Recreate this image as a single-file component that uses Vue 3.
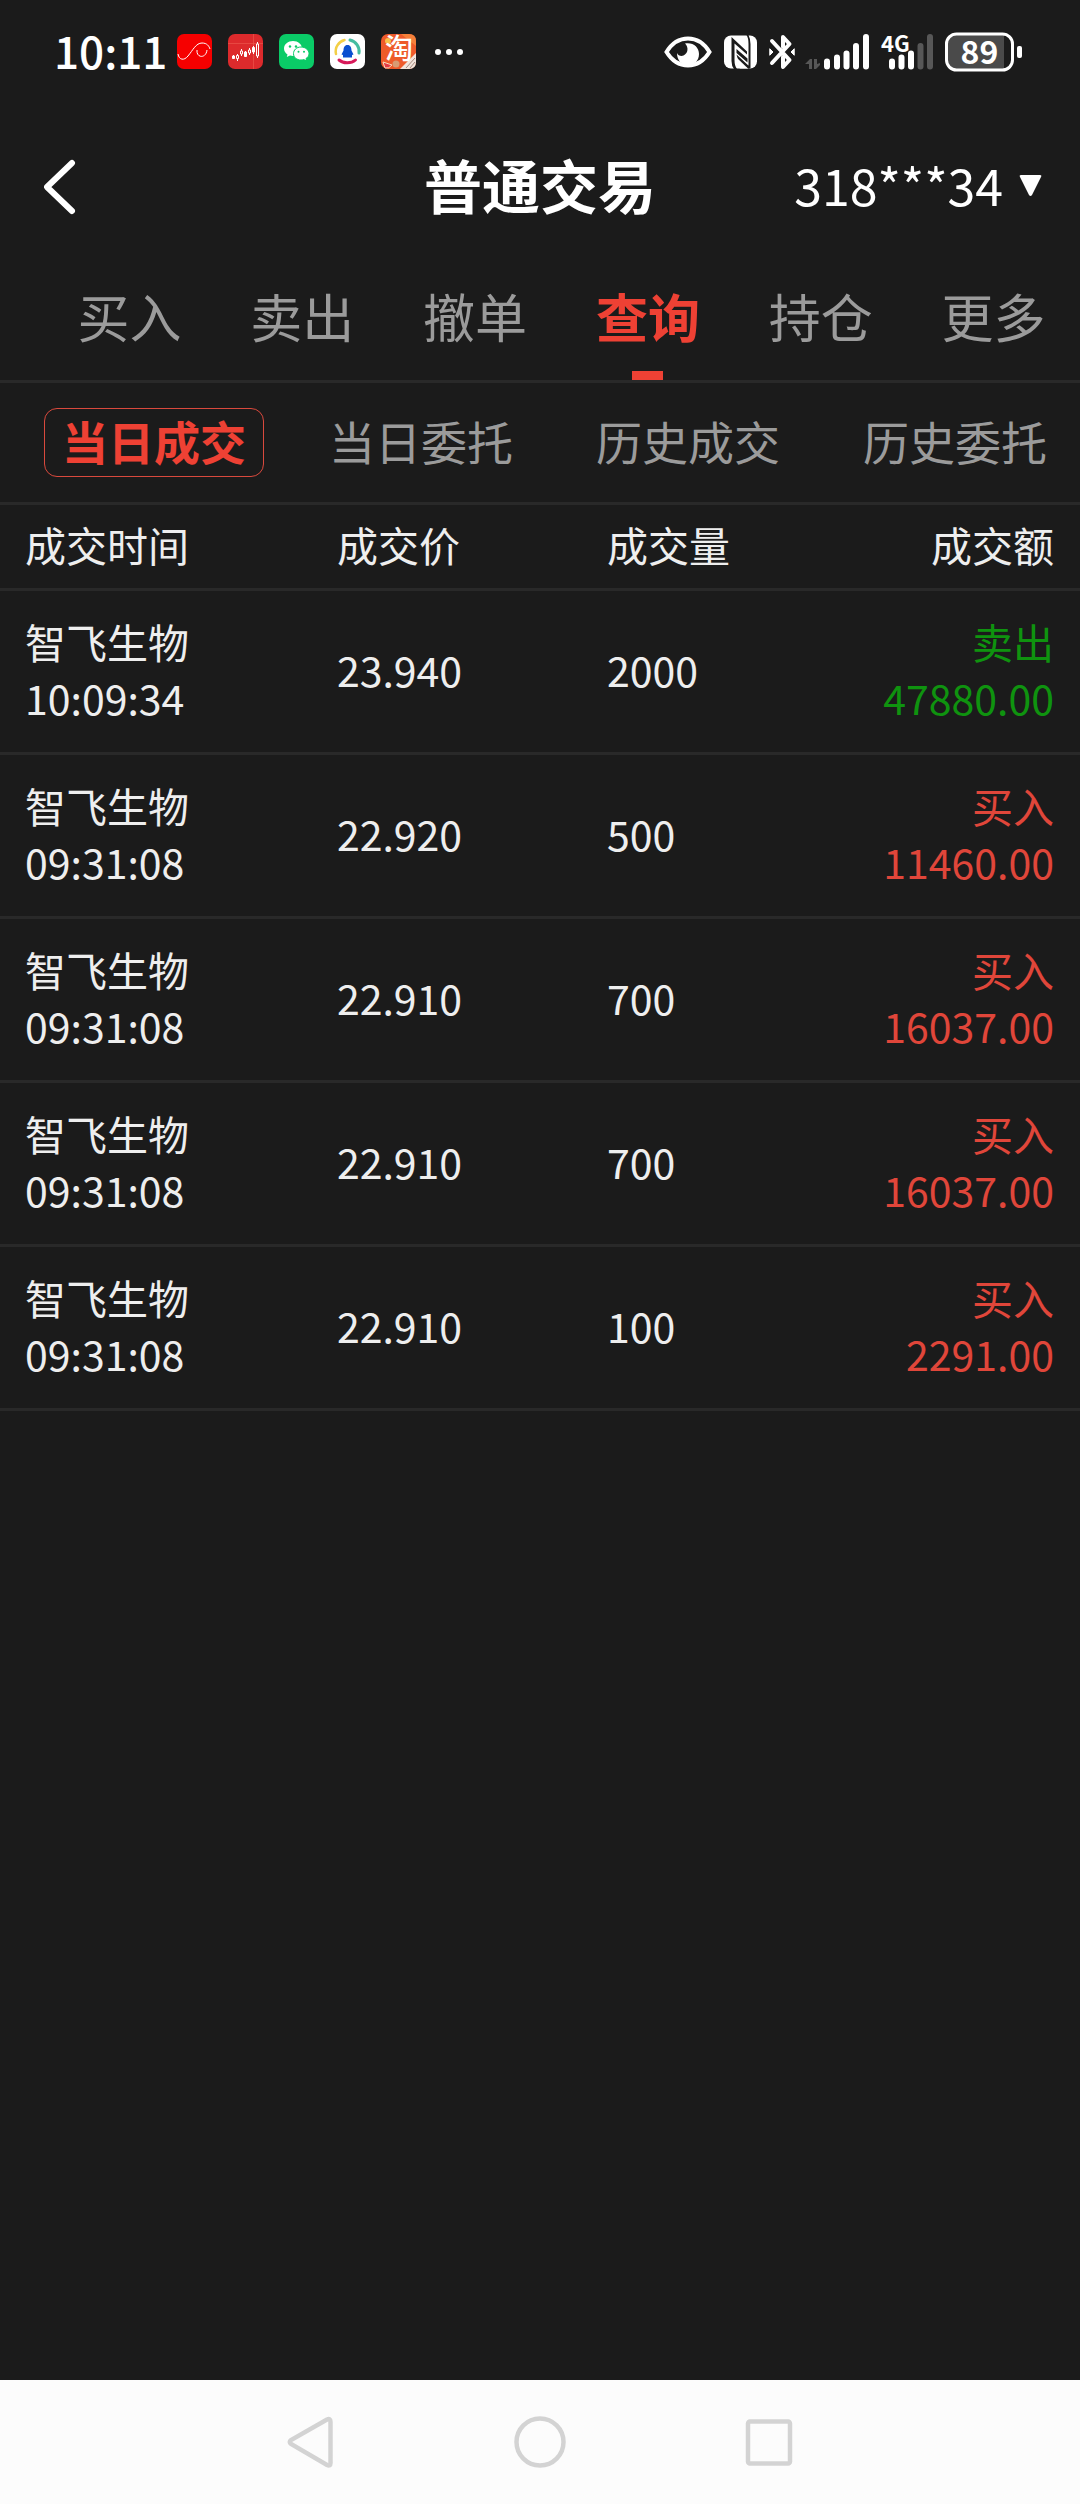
<script setup>
import { ref } from 'vue'

const tabs = ['买入', '卖出', '撤单', '查询', '持仓', '更多']
const activeTab = ref('查询')

const filters = ['当日成交', '当日委托', '历史成交', '历史委托']
const activeFilter = ref('当日成交')

const trades = [
  { name: '智飞生物', time: '10:09:34', price: '23.940', volume: '2000', side: '卖出', amount: '47880.00' },
  { name: '智飞生物', time: '09:31:08', price: '22.920', volume: '500', side: '买入', amount: '11460.00' },
  { name: '智飞生物', time: '09:31:08', price: '22.910', volume: '700', side: '买入', amount: '16037.00' },
  { name: '智飞生物', time: '09:31:08', price: '22.910', volume: '700', side: '买入', amount: '16037.00' },
  { name: '智飞生物', time: '09:31:08', price: '22.910', volume: '100', side: '买入', amount: '2291.00' },
]
</script>

<template>
  <div class="screen">
    <div class="status">
      <span class="clock">10:11</span>
      <div class="apps">
        <svg width="35" height="35" viewBox="0 0 35 35">
          <rect width="35" height="35" rx="7" fill="#f60000" />
          <path d="M1 20C2 26 7 27 11 22C16 16 19 9 25 9C30 9 32 12 33 15M20 16C19 24 29 25 30 16" fill="none" stroke="#fff" stroke-width="1" />
        </svg>
        <svg width="35" height="35" viewBox="0 0 35 35">
          <rect width="35" height="35" rx="7" fill="#dd2a2c" />
          <path d="M0 9.500H35M25.500 0V35" stroke="#ee5a50" stroke-width=".6" />
          <path d="M5.500 21V25M9.500 20V27M13.500 15V22M17.500 17V23M21.500 14V21M25.500 12V20M29.500 8V24" stroke="#fff" stroke-width="1" />
          <path d="M4.500 22h2v2.500h-2zM16.500 18h2v4.500h-2zM24.500 13.500h2v4.500h-2z" fill="#fff" stroke="#fff" />
          <path d="M8.500 21.500h2v3h-2zM12.500 17h2v3h-2zM20.500 16h2v3h-2zM28.500 10h2v12h-2z" fill="#dd2a2c" stroke="#fff" />
        </svg>
        <svg width="35" height="35" viewBox="0 0 35 35">
          <rect width="35" height="35" rx="7" fill="#0acb67" />
          <path d="M14 7C9 7 5 10.300 5 14.500C5 17 6.200 19 8.500 20.400L7.800 23L11 21.500C12 21.800 13 22 14 22C19 22 23 18.700 23 14.500S19 7 14 7Z" fill="#fff" />
          <path d="M22 13C17.500 13 14.500 16 14.500 19.700S17.800 26 22 26C23 26 24 25.900 24.800 25.600L27.600 27L27 24.500C29 23.400 30 21.600 30 19.700C30 16 26.500 13 22 13Z" fill="#fff" stroke="#0acb67" stroke-width="1" />
          <g fill="#0acb67"><circle cx="11" cy="12.500" r="1.200" /><circle cx="17" cy="12.500" r="1.200" /><circle cx="19.500" cy="17.800" r="1" /><circle cx="25" cy="17.800" r="1" /></g>
        </svg>
        <svg width="35" height="35" viewBox="0 0 35 35">
          <rect width="35" height="35" rx="7" fill="#fff" />
          <path d="M6 20C4.500 13 9 7.500 14.500 6" fill="none" stroke="#f3cf45" stroke-width="2.500" stroke-linecap="round" />
          <path d="M20 6C26 7.500 30 13 29 19" fill="none" stroke="#45bda0" stroke-width="3" stroke-linecap="round" />
          <path d="M9 26C13 29.500 21 30 25.500 26" fill="none" stroke="#d71959" stroke-width="3" stroke-linecap="round" />
          <path d="M17.500 11C14.500 11 13.500 13.500 13.500 16.500L11.500 20.500L13 21V23.500H22V21L23.500 20.500L21.500 16.500C21.500 13.500 20.500 11 17.500 11Z" fill="#0a4fd0" />
        </svg>
        <span class="tao">
          <svg width="35" height="35" viewBox="0 0 35 35">
            <rect width="35" height="35" rx="7" fill="#ee5a2a" />
            <path d="M20 0H28Q35 0 35 7V12Z" fill="#f5803a" />
            <circle cx="7" cy="7" r="3" fill="#f9c04a" />
            <path d="M19 35L35 19V28Q35 35 28 35Z" fill="#f1e4dc" />
            <path d="M25 34L34 24M29 34L34 28" stroke="#a78b80" stroke-width="1" />
            <path d="M2 28L11 31Q8 35 4 34Z" fill="#e33b45" stroke="#f8d9b9" stroke-width="1" />
            <circle cx="15" cy="30" r="3.500" fill="#d89b72" />
          </svg>
          <span class="tao-text">淘</span>
        </span>
      </div>
      <svg class="dots" width="28" height="6" viewBox="0 0 28 6" fill="#fff">
        <circle cx="3" cy="3" r="3" /><circle cx="14" cy="3" r="3" /><circle cx="25" cy="3" r="3" />
      </svg>
      <div class="indicators">
        <svg width="48" height="40" viewBox="0 0 48 40">
          <path d="M2.500 20C8 11 15.500 6.500 24 6.500S40 11 45.500 20C40 29 32.500 33.500 24 33.500S8 29 2.500 20Z" fill="none" stroke="#fff" stroke-width="4" />
          <path d="M21 11.500C29 10 35 15 35 22C35 29 30 33 24 33C17 33 13 28 13 21C14 23.500 17 24.500 19.500 23.500C24 21.500 25 15.500 21 11.500Z" fill="#fff" />
        </svg>
        <svg class="nfc" width="34" height="40" viewBox="0 0 34 40">
          <rect x="0" y="3.500" width="33" height="33" rx="7" fill="#fff" />
          <path d="M7.500 5L23 19.500V22.500L10.500 11.500V28Q10.500 34 13 37H10Q7.500 34 7.500 29ZM12.500 17L23.500 26.500V30.500L12.500 21ZM12.500 22.500L25.500 34.500V37Q14 33 12.500 22.500ZM22.500 3H24.500Q26.500 7 26.500 12V36H24.500V12Q24.500 6 22.500 3Z" fill="#1b1b1b" />
          <path d="M12.500 25.500L24 36.500H16Q12.500 34 12.500 28Z" fill="#fff" />
        </svg>
        <svg class="bt" width="26" height="40" viewBox="0 0 26 40" fill="none" stroke="#fff" stroke-linejoin="round" stroke-linecap="round">
          <path d="M3 9L20.500 28L14 35V25M14 15V5L20.500 12L3 31" stroke-width="4" />
          <path d="M1 17L4 20L1 23ZM25 17L22 20L25 23Z" stroke-width="1" fill="#fff" />
        </svg>
        <svg class="signal" width="66" height="40" viewBox="0 0 66 40">
          <path d="M1 32L6 27H8V37H5V32ZM10 27H13V32L16 31V33L12 37H10Z" fill="#575757" />
          <path d="M23 29.500V34.500M33 25.500V34.500M42.500 21.500V34.500M52 14V34.500M62 5V34.500" stroke="#fff" stroke-width="6" stroke-linecap="round" />
        </svg>
        <div class="signal-4g">
          <span class="net">4G</span>
          <svg width="54" height="40" viewBox="0 0 54 40" stroke-width="6" stroke-linecap="round">
            <path d="M11 29.500V34.500M20.500 25.500V34.500M30 21.500V34.500" stroke="#fff" />
            <path d="M39.500 14V34.500M49 5V34.500" stroke="#575757" />
          </svg>
        </div>
        <div class="battery">
          <svg width="78" height="40" viewBox="0 0 78 40">
            <path d="M10 3H59V37H10Q3 37 3 30V10Q3 3 10 3Z" fill="#4a4a4a" />
            <rect x="1.500" y="2" width="66" height="36" rx="10" fill="none" stroke="#fff" stroke-width="3" />
            <rect x="72" y="14" width="5" height="12" rx="2" fill="#fff" />
          </svg>
          <span class="level">89</span>
        </div>
      </div>
    </div>

    <header class="bar">
      <button class="back" type="button" aria-label="返回">
        <svg width="34" height="56" viewBox="0 0 34 56" fill="none" stroke="#fff" stroke-width="6" stroke-linecap="round" stroke-linejoin="round">
          <path d="M28 4L3 28L28 52" />
        </svg>
      </button>
      <h1>普通交易</h1>
      <button class="account" type="button">
        <span>318***34</span>
        <svg width="23" height="23" viewBox="0 0 23 23"><path d="M2 1H21Q23 1 22 3L13 21Q11.500 23 10 21L1 3Q0 1 2 1Z" fill="#fff" /></svg>
      </button>
    </header>

    <nav class="tabs">
      <button v-for="t in tabs" :key="t" type="button" :class="{ on: t === activeTab }" @click="activeTab = t">{{ t }}</button>
    </nav>

    <div class="filters">
      <button v-for="f in filters" :key="f" type="button" :class="{ on: f === activeFilter }" @click="activeFilter = f">{{ f }}</button>
    </div>

    <table>
      <colgroup>
        <col class="c-time" /><col class="c-price" /><col class="c-volume" /><col />
      </colgroup>
      <thead>
        <tr><th>成交时间</th><th>成交价</th><th>成交量</th><th>成交额</th></tr>
      </thead>
      <tbody>
        <tr v-for="(t, i) in trades" :key="i">
          <td><div>{{ t.name }}</div><div>{{ t.time }}</div></td>
          <td>{{ t.price }}</td>
          <td>{{ t.volume }}</td>
          <td :class="t.side === '卖出' ? 'sell' : 'buy'"><div>{{ t.side }}</div><div>{{ t.amount }}</div></td>
        </tr>
      </tbody>
    </table>

    <footer class="softkeys">
      <button type="button" aria-label="返回">
        <svg width="52" height="52" viewBox="0 0 52 52"><path d="M42 3.500Q45.500 2 45.500 6V47Q45.500 50.500 42 49L6 28Q3.500 26 6 24Z" /></svg>
      </button>
      <button type="button" aria-label="主屏幕">
        <svg width="52" height="52" viewBox="0 0 52 52"><circle cx="26" cy="26" r="23.500" /></svg>
      </button>
      <button type="button" aria-label="最近任务">
        <svg width="52" height="52" viewBox="0 0 52 52"><rect x="5" y="5.500" width="42" height="42" rx="2" /></svg>
      </button>
    </footer>
  </div>
</template>

<style>
body {
  margin: 0;
  background: #1b1b1b;
}
</style>

<style scoped>
.screen {
  min-height: 100vh;
  display: flex;
  flex-direction: column;
  background: #1b1b1b;
  color: #eee;
  font-family: "Noto Sans CJK SC", "Noto Sans", sans-serif;
}
svg {
  display: block;
}
button {
  border: 0;
  padding: 0;
  margin: 0;
  background: none;
  color: inherit;
  font: inherit;
}
.status {
  height: 103px;
  display: flex;
  align-items: center;
  padding: 0 57px 0 54px;
  color: #fff;
}
.clock {
  font-size: 44px;
  font-weight: 500;
  line-height: 48px;
  padding-bottom: 4px;
  width: 123px;
}
.apps {
  display: flex;
  gap: 16px;
}
.dots {
  margin-left: 19px;
}
.tao {
  position: relative;
}
.tao-text {
  position: absolute;
  left: 4px;
  top: 0;
  font-size: 28px;
  font-weight: 500;
  line-height: 26px;
}
.indicators {
  margin-left: auto;
  display: flex;
  align-items: center;
}
.nfc {
  margin-left: 12px;
}
.bt {
  margin-left: 11px;
}
.signal {
  margin-left: 9px;
}
.signal-4g {
  position: relative;
  margin-left: 11px;
}
.net {
  position: absolute;
  left: 0;
  top: 0;
  font-size: 22px;
  font-weight: 700;
  line-height: 20px;
}
.battery {
  position: relative;
  margin-left: 10px;
}
.level {
  position: absolute;
  left: 0;
  top: 0;
  width: 69px;
  text-align: center;
  font-size: 32px;
  font-weight: 700;
  line-height: 36px;
}
.bar {
  height: 136px;
  padding: 16px 36px 0;
  display: grid;
  grid-template-columns: 1fr auto 1fr;
  align-items: center;
  color: #fff;
}
.back {
  justify-self: start;
  padding-left: 8px;
}
h1 {
  margin: 0;
  padding-bottom: 6px;
  font-size: 58px;
  font-weight: 700;
  line-height: 80px;
}
.account {
  justify-self: end;
  display: flex;
  align-items: center;
  gap: 16px;
  padding-right: 2px;
  font-size: 50px;
  line-height: 72px;
}
.account span {
  padding-bottom: 6px;
}
.account svg {
  margin-bottom: 4px;
}
.tabs {
  display: grid;
  grid-template-columns: repeat(6, 1fr);
  padding-left: 43px;
  border-bottom: 3px solid #292929;
}
.tabs button {
  position: relative;
  height: 125px;
  padding-bottom: 4px;
  font-size: 52px;
  line-height: 72px;
  color: #9b9b9b;
}
.tabs .on {
  color: #ee4134;
  font-weight: 700;
}
.tabs .on::after {
  content: "";
  position: absolute;
  left: 50%;
  bottom: 0;
  width: 31px;
  height: 9px;
  margin-left: -16px;
  background: #ee4134;
}
.filters {
  display: flex;
  justify-content: space-between;
  align-items: center;
  height: 119px;
  padding: 0 15px 0 44px;
  border-bottom: 3px solid #292929;
}
.filters button {
  box-sizing: border-box;
  width: 220px;
  height: 69px;
  padding-bottom: 4px;
  border: 1px solid transparent;
  border-radius: 13px;
  font-size: 46px;
  line-height: 63px;
  color: #9b9b9b;
}
.filters .on {
  color: #ee4134;
  border-color: #d9493d;
  font-weight: 700;
}
table {
  width: 100%;
  table-layout: fixed;
  border-collapse: separate;
  border-spacing: 0;
  font-size: 41px;
  line-height: 56px;
}
.c-time {
  width: 31.2%;
}
.c-price {
  width: 25%;
}
.c-volume {
  width: 18%;
}
th,
td {
  padding: 0 0 6px;
  border-bottom: 3px solid #292929;
  text-align: left;
  font-weight: 400;
  vertical-align: middle;
}
th {
  height: 77px;
}
td {
  height: 155px;
}
th:first-child,
td:first-child {
  padding-left: 25px;
}
th:last-child,
td:last-child {
  padding-right: 26px;
  text-align: right;
}
.sell {
  color: #0f930f;
}
.buy {
  color: #e0463a;
}
.softkeys {
  margin-top: auto;
  height: 124px;
  display: flex;
  justify-content: center;
  align-items: center;
  gap: 177px;
  background: #fcfcfc;
}
.softkeys svg {
  fill: none;
  stroke: #d3d3d3;
  stroke-width: 4.5;
}
</style>
